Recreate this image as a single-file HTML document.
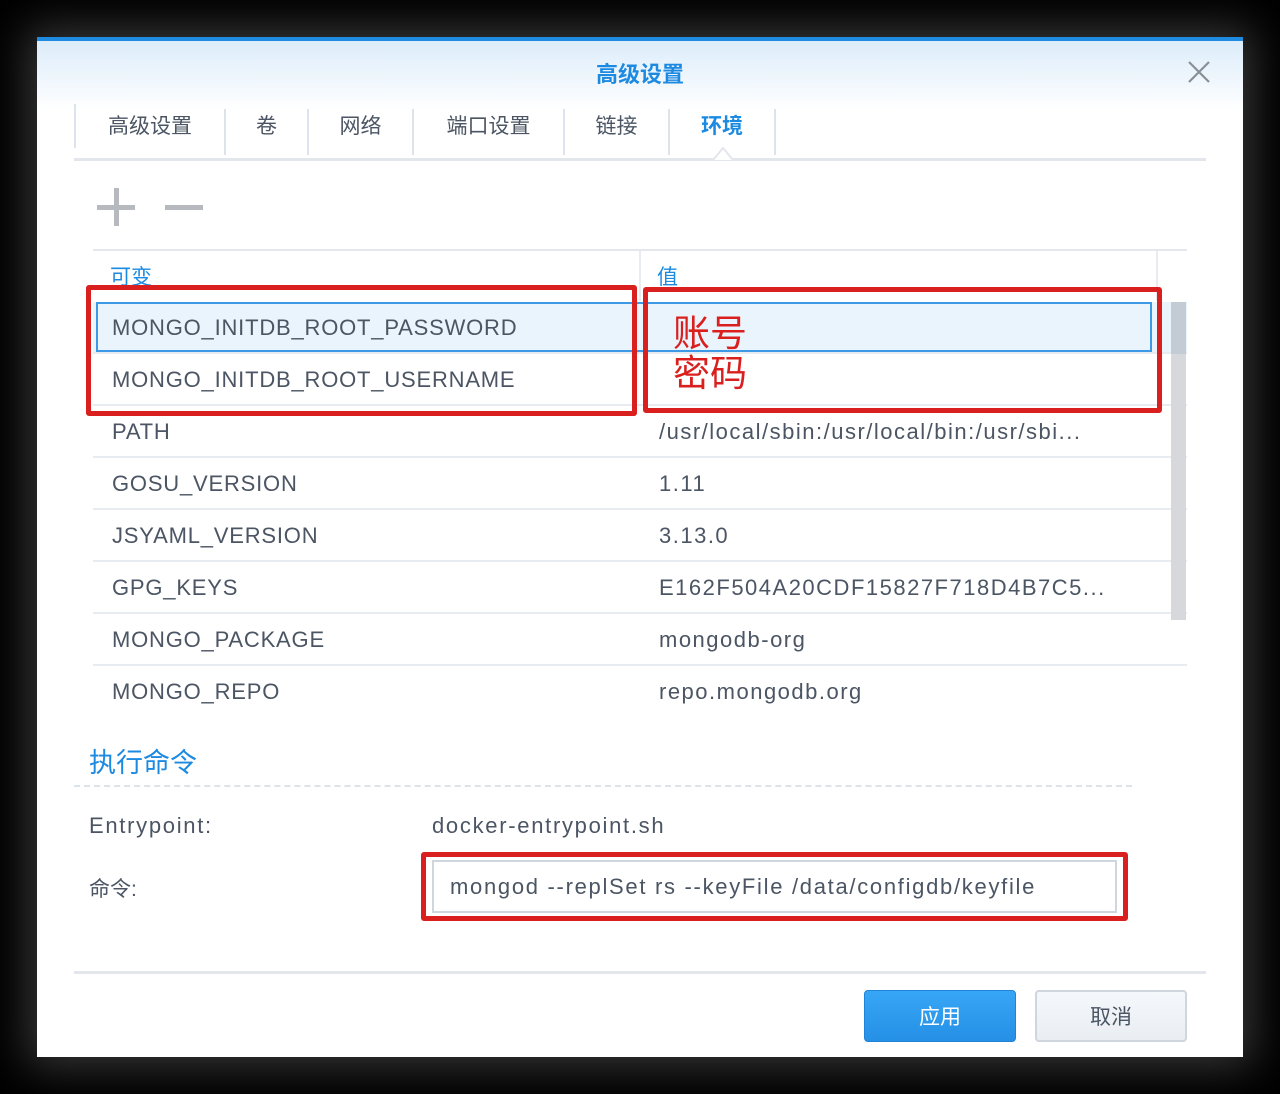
<!DOCTYPE html>
<html><head><meta charset="utf-8"><style>
*{margin:0;padding:0;box-sizing:border-box}
body{width:1280px;height:1094px;background:#000;position:relative;overflow:hidden;font-family:"Liberation Sans","Noto Sans CJK SC",sans-serif;color:#4b5563}
.dlg{position:absolute;left:37px;top:37px;width:1206px;height:1020px;background:#fff;box-shadow:0 0 40px 10px rgba(90,90,90,.6)}
.a{position:absolute}
.top{left:0;top:0;width:1206px;height:4px;background:#1f8be0}
.hdr{left:0;top:4px;width:1206px;height:70px;background:linear-gradient(#dcecfa,#fff)}
.title{left:0;width:1206px;top:20px;text-align:center;color:#1d8ae2;font-size:22px;font-weight:bold}
.tab{top:72px;height:46px;font-size:21px;color:#4b5563;line-height:36px;text-align:center;border-right:2px solid #dde3ea}
.row{left:56px;width:1094px;height:52px;border-bottom:2px solid #e8ecf1;font-size:22px;line-height:52px}
.row span{position:absolute;left:19px;letter-spacing:0.8px}
.row b{position:absolute;left:566px;font-weight:normal;letter-spacing:1.5px}
.red{border:5px solid #d9201f;border-radius:3px}
.ls{letter-spacing:1.7px}
</style></head><body>
<div class="dlg">
<div class="a top"></div><div class="a hdr"></div>
<div class="a title">高级设置</div>
<svg class="a" style="left:1150px;top:24px" width="24" height="22"><path d="M2 1L22 21M22 1L2 21" stroke="#8a8f96" stroke-width="2.2"/></svg>
<div class="a" style="left:37px;top:67px;width:2px;height:44px;background:#dde3ea"></div>
<div class="a tab" style="left:39px;width:150px">高级设置</div>
<div class="a tab" style="left:189px;width:83px">卷</div>
<div class="a tab" style="left:272px;width:105px">网络</div>
<div class="a tab" style="left:377px;width:151px">端口设置</div>
<div class="a tab" style="left:528px;width:105px">链接</div>
<div class="a tab" style="left:633px;width:106px;color:#1d8ae2;font-weight:bold">环境</div>
<div class="a" style="left:37px;top:121px;width:1132px;height:3px;background:#e3e6ea"></div>
<svg class="a" style="left:676px;top:110px" width="24" height="14"><path d="M0 13L10 1L20 13" fill="#fff" stroke="#e3e6ea" stroke-width="2"/></svg>
<div class="a" style="left:60px;top:168px;width:38px;height:5px;background:#b6b9be"></div>
<div class="a" style="left:77px;top:151px;width:5px;height:38px;background:#b6b9be"></div>
<div class="a" style="left:128px;top:168px;width:38px;height:5px;background:#b6b9be"></div>
<div class="a" style="left:56px;top:212px;width:1094px;height:2px;background:#e3e8ef"></div>
<div class="a" style="left:602px;top:214px;width:2px;height:50px;background:#e8ecf1"></div>
<div class="a" style="left:1119px;top:214px;width:2px;height:50px;background:#e8ecf1"></div>
<div class="a" style="left:73px;top:224px;color:#1d8ae2;font-size:21px">可变</div>
<div class="a" style="left:620px;top:224px;color:#1d8ae2;font-size:21px">值</div>
<div class="a" style="left:56px;top:265px;width:1094px;height:52px;background:#eaf4fd"></div>
<div class="a" style="left:59px;top:265px;width:1056px;height:50px;border:2px solid #3d99e6"></div>
<div class="a row" style="top:265px"><span>MONGO_INITDB_ROOT_PASSWORD</span></div>
<div class="a row" style="top:317px"><span>MONGO_INITDB_ROOT_USERNAME</span></div>
<div class="a row" style="top:369px"><span>PATH</span><b>/usr/local/sbin:/usr/local/bin:/usr/sbi...</b></div>
<div class="a row" style="top:421px"><span>GOSU_VERSION</span><b>1.11</b></div>
<div class="a row" style="top:473px"><span>JSYAML_VERSION</span><b>3.13.0</b></div>
<div class="a row" style="top:525px"><span>GPG_KEYS</span><b>E162F504A20CDF15827F718D4B7C5...</b></div>
<div class="a row" style="top:577px"><span>MONGO_PACKAGE</span><b>mongodb-org</b></div>
<div class="a row" style="top:629px;border:none"><span>MONGO_REPO</span><b>repo.mongodb.org</b></div>
<div class="a" style="left:1134px;top:265px;width:15px;height:318px;background:#d6d8db"></div>
<div class="a" style="left:1134px;top:265px;width:15px;height:52px;background:#c3ccd5"></div>
<div class="a red" style="left:49px;top:248px;width:551px;height:131px"></div>
<div class="a red" style="left:606px;top:250px;width:519px;height:126px"></div>
<div class="a" style="left:636px;top:277px;color:#d9201f;font-size:37px;line-height:40px">账号<br>密码</div>
<div class="a" style="left:52px;top:704px;color:#1d8ae2;font-size:27px">执行命令</div>
<div class="a" style="left:37px;top:748px;width:1058px;border-top:2px dashed #dde3ea"></div>
<div class="a ls" style="left:52px;top:776px;font-size:22px">Entrypoint:</div>
<div class="a ls" style="left:395px;top:776px;font-size:22px">docker-entrypoint.sh</div>
<div class="a" style="left:52px;top:836px;font-size:21px">命令:</div>
<div class="a red" style="left:384px;top:815px;width:707px;height:69px"></div>
<div class="a ls" style="left:395px;top:823px;width:685px;height:53px;border:2px solid #cfd6de;font-size:22px;line-height:49px;padding-left:16px;white-space:nowrap;overflow:hidden">mongod --replSet rs --keyFile /data/configdb/keyfile</div>
<div class="a" style="left:37px;top:934px;width:1132px;height:3px;background:#e3e6ea"></div>
<div class="a" style="left:827px;top:953px;width:152px;height:52px;border-radius:4px;background:linear-gradient(#38a6f6,#2590e6);border:1px solid #1f83d8;color:#fff;font-size:21px;text-align:center;line-height:54px">应用</div>
<div class="a" style="left:998px;top:953px;width:152px;height:52px;border-radius:4px;background:linear-gradient(#f5f8fb,#e9eef3);border:2px solid #cfd6de;color:#4b5563;font-size:21px;text-align:center;line-height:52px">取消</div>
</div>
</body></html>
